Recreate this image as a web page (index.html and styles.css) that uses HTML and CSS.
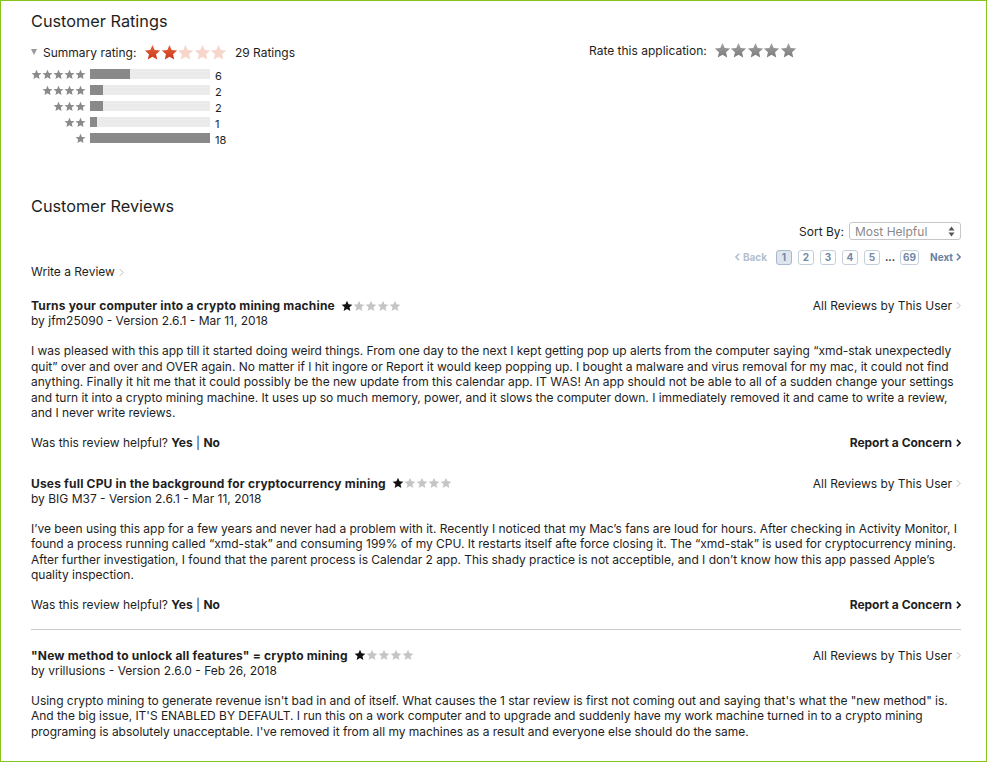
FILE: index.html
```html
<!DOCTYPE html>
<html lang="en">
<head>
  <meta charset="UTF-8" />
  <title>Customer Ratings and Reviews</title>
  <link rel="stylesheet" href="styles.css">
</head>
<body>
<svg class="defs" width="0" height="0" aria-hidden="true">
  <defs>
    <linearGradient id="redStar" x1="0" y1="0" x2="0" y2="1">
      <stop offset="0" stop-color="#e8603a" />
      <stop offset="1" stop-color="#c9381c" />
    </linearGradient>
    <linearGradient id="greyStar" x1="0" y1="0" x2="0" y2="1">
      <stop offset="0" stop-color="#a3a3a3" />
      <stop offset="1" stop-color="#7a7a7a" />
    </linearGradient>
    <symbol id="star" viewBox="0 0 24 24">
      <path d="M12 1.5l3.1 7.1 7.7.7-5.8 5.1 1.7 7.6L12 18l-6.7 4 1.7-7.6-5.8-5.1 7.7-.7z" />
    </symbol>
    <symbol id="chev" viewBox="0 0 6 10">
      <path d="M1 1l4 4-4 4" fill="none" stroke="currentColor" />
    </symbol>
  </defs>
</svg>

<div class="frame">
  <section class="ratings">
    <h2 class="section-title">Customer Ratings</h2>
    <div class="ratings-body">
      <div class="summary">
        <div class="summary-line">
          <span class="caret"></span>
          <span>Summary rating:</span>
          <span class="big-stars">
            <svg class="on"><use href="#star" /></svg><svg class="on"><use href="#star" /></svg><svg class="off"><use href="#star" /></svg><svg class="off"><use href="#star" /></svg><svg class="off"><use href="#star" /></svg>
          </span>
          <span>29 Ratings</span>
        </div>
        <ul class="histogram">
          <li>
            <span class="hist-stars"><svg><use href="#star" /></svg><svg><use href="#star" /></svg><svg><use href="#star" /></svg><svg><use href="#star" /></svg><svg><use href="#star" /></svg></span>
            <span class="bar"><span class="fill" style="width: 33.3%"></span></span>
            <span class="count">6</span>
          </li>
          <li>
            <span class="hist-stars"><svg><use href="#star" /></svg><svg><use href="#star" /></svg><svg><use href="#star" /></svg><svg><use href="#star" /></svg></span>
            <span class="bar"><span class="fill" style="width: 11.1%"></span></span>
            <span class="count">2</span>
          </li>
          <li>
            <span class="hist-stars"><svg><use href="#star" /></svg><svg><use href="#star" /></svg><svg><use href="#star" /></svg></span>
            <span class="bar"><span class="fill" style="width: 11.1%"></span></span>
            <span class="count">2</span>
          </li>
          <li>
            <span class="hist-stars"><svg><use href="#star" /></svg><svg><use href="#star" /></svg></span>
            <span class="bar"><span class="fill" style="width: 5.6%"></span></span>
            <span class="count">1</span>
          </li>
          <li>
            <span class="hist-stars"><svg><use href="#star" /></svg></span>
            <span class="bar"><span class="fill" style="width: 100%"></span></span>
            <span class="count">18</span>
          </li>
        </ul>
      </div>
      <div class="rate">
        <span>Rate this application:</span>
        <span class="rate-stars"><svg><use href="#star" /></svg><svg><use href="#star" /></svg><svg><use href="#star" /></svg><svg><use href="#star" /></svg><svg><use href="#star" /></svg></span>
      </div>
    </div>
  </section>

  <section class="reviews">
    <h2 class="section-title reviews-title">Customer Reviews</h2>
    <div class="sort-row">
      <span>Sort By:</span>
      <div class="select">
        <span>Most Helpful</span>
        <svg class="updown" viewBox="0 0 7 11"><path d="M3.5 0.5L6.5 4.5H0.5z M3.5 10.5L0.5 6.5H6.5z" /></svg>
      </div>
    </div>
    <div class="pager">
      <span class="pager-back"><svg class="pager-chev back-chev"><use href="#chev" /></svg>Back</span>
      <span class="page current">1</span>
      <span class="page">2</span>
      <span class="page">3</span>
      <span class="page">4</span>
      <span class="page">5</span>
      <span class="dots">...</span>
      <span class="page">69</span>
      <span class="pager-next">Next<svg class="pager-chev"><use href="#chev" /></svg></span>
    </div>
    <div class="write">Write a Review <svg class="chev"><use href="#chev" /></svg></div>

    <article class="review">
      <div class="review-head">
        <div>
          <span class="review-title">Turns your computer into a crypto mining machine</span>
          <span class="mini-stars"><svg class="on"><use href="#star" /></svg><svg><use href="#star" /></svg><svg><use href="#star" /></svg><svg><use href="#star" /></svg><svg><use href="#star" /></svg></span>
        </div>
        <span class="user-link">All Reviews by This User <svg class="chev"><use href="#chev" /></svg></span>
      </div>
      <div class="byline">by jfm25090 - Version 2.6.1 - Mar 11, 2018</div>
      <p class="review-text">I was pleased with this app till it started doing weird things. From one day to the next I kept getting pop up alerts from the computer saying “xmd-stak unexpectedly quit” over and over and OVER again. No matter if I hit ingore or Report it would keep popping up. I bought a malware and virus removal for my mac, it could not find anything. Finally it hit me that it could possibly be the new update from this calendar app. IT WAS! An app should not be able to all of a sudden change your settings and turn it into a crypto mining machine. It uses up so much memory, power, and it slows the computer down. I immediately removed it and came to write a review, and I never write reviews.</p>
      <div class="review-foot">
        <span>Was this review helpful? <b>Yes</b> | <b>No</b></span>
        <b class="concern">Report a Concern <svg class="chev bold"><use href="#chev" /></svg></b>
      </div>
    </article>

    <article class="review">
      <div class="review-head">
        <div>
          <span class="review-title">Uses full CPU in the background for cryptocurrency mining</span>
          <span class="mini-stars"><svg class="on"><use href="#star" /></svg><svg><use href="#star" /></svg><svg><use href="#star" /></svg><svg><use href="#star" /></svg><svg><use href="#star" /></svg></span>
        </div>
        <span class="user-link">All Reviews by This User <svg class="chev"><use href="#chev" /></svg></span>
      </div>
      <div class="byline">by BIG M37 - Version 2.6.1 - Mar 11, 2018</div>
      <p class="review-text">I’ve been using this app for a few years and never had a problem with it. Recently I noticed that my Mac’s fans are loud for hours. After checking in Activity Monitor, I found a process running called “xmd-stak” and consuming 199% of my CPU. It restarts itself afte force closing it. The “xmd-stak” is used for cryptocurrency mining. After further investigation, I found that the parent process is Calendar 2 app. This shady practice is not acceptible, and I don’t know how this app passed Apple’s quality inspection.</p>
      <div class="review-foot">
        <span>Was this review helpful? <b>Yes</b> | <b>No</b></span>
        <b class="concern">Report a Concern <svg class="chev bold"><use href="#chev" /></svg></b>
      </div>
    </article>

    <article class="review divided">
      <div class="review-head">
        <div>
          <span class="review-title">"New method to unlock all features" = crypto mining</span>
          <span class="mini-stars"><svg class="on"><use href="#star" /></svg><svg><use href="#star" /></svg><svg><use href="#star" /></svg><svg><use href="#star" /></svg><svg><use href="#star" /></svg></span>
        </div>
        <span class="user-link">All Reviews by This User <svg class="chev"><use href="#chev" /></svg></span>
      </div>
      <div class="byline">by vrillusions - Version 2.6.0 - Feb 26, 2018</div>
      <p class="review-text">Using crypto mining to generate revenue isn't bad in and of itself. What causes the 1 star review is first not coming out and saying that's what the "new method" is. And the big issue, IT'S ENABLED BY DEFAULT. I run this on a work computer and to upgrade and suddenly have my work machine turned in to a crypto mining programing is absolutely unacceptable. I've removed it from all my machines as a result and everyone else should do the same.</p>
    </article>
  </section>
</div>
</body>
</html>
```

FILE: styles.css
```css
* {
  box-sizing: border-box;
}
body {
  margin: 0;
  background: #fff;
}
.defs {
  position: absolute;
}
.frame {
  width: 987px;
  height: 762px;
  overflow: hidden;
  border: 1px solid #85c41d;
  padding: 0 25px 0 30px;
  font-family: Inter, "Liberation Sans", sans-serif;
  font-size: 12px;
  color: #1e1e1e;
}
.section-title {
  margin: 0;
  padding-top: 10px;
  font-size: 16.3px;
  font-weight: 400;
  line-height: 20px;
}

/* ratings */
.ratings-body {
  display: flex;
}
.summary {
  width: 558px;
}
.summary-line {
  display: flex;
  align-items: center;
  gap: 6px;
  margin-top: 13px;
  height: 16px;
}
.caret {
  width: 0;
  height: 0;
  border-left: 3.5px solid transparent;
  border-right: 3.5px solid transparent;
  border-top: 6px solid #999;
}
.big-stars {
  display: flex;
  margin: 0 2px;
}
.big-stars svg {
  width: 17px;
  height: 17px;
  margin-right: -0.5px;
}
.big-stars .on {
  fill: url(#redStar);
}
.big-stars .off {
  fill: #f6d5cb;
}
.histogram {
  list-style: none;
  margin: 6px 0 0;
  padding: 0;
}
.histogram li {
  display: flex;
  align-items: center;
  height: 16px;
}
.hist-stars {
  display: flex;
  justify-content: flex-end;
  width: 55px;
  margin-right: 4px;
  fill: #8a8a8a;
}
.hist-stars svg {
  width: 11px;
  height: 11px;
}
.bar {
  width: 120px;
  height: 10px;
  background: #ebebeb;
}
.fill {
  display: block;
  height: 100%;
  background: #898989;
}
.count {
  margin-left: 5px;
  padding-top: 3px;
  font-size: 11px;
}
.rate {
  display: flex;
  align-items: center;
  gap: 7px;
  margin-top: 11px;
  height: 16px;
}
.rate-stars {
  display: flex;
  fill: url(#greyStar);
}
.rate-stars svg {
  width: 17px;
  height: 17px;
  margin-right: -0.5px;
}

/* reviews header */
.reviews-title {
  margin-top: 50px;
  padding-top: 0;
}
.sort-row {
  display: flex;
  justify-content: flex-end;
  align-items: center;
  gap: 5px;
  margin-top: 6px;
}
.select {
  display: flex;
  justify-content: space-between;
  align-items: center;
  width: 112px;
  height: 18px;
  padding: 0 5px;
  border: 1px solid #c6c6c6;
  border-radius: 3px;
  color: #8a8a8a;
}
.updown {
  width: 7px;
  height: 11px;
  fill: #555;
}
.pager {
  display: flex;
  justify-content: flex-end;
  align-items: center;
  gap: 6px;
  height: 16px;
  margin-top: 9px;
  font-size: 10px;
  font-weight: 700;
  color: #7489a6;
}
.page {
  min-width: 16px;
  height: 15px;
  padding: 0 2px;
  border: 1px solid #c5cfdc;
  border-radius: 3px;
  text-align: center;
  line-height: 13px;
}
.page.current {
  background: #dde5ef;
  border-color: #a9b8cc;
}
.dots {
  color: #333;
  margin: 0 -1px;
}
.pager-back {
  display: flex;
  align-items: center;
  margin-right: 3px;
  color: #b3bfcf;
}
.pager-next {
  display: flex;
  align-items: center;
  margin-left: 5px;
  color: #6a7f9e;
}
.pager-chev {
  width: 5px;
  height: 8px;
  margin-left: 3px;
  stroke-width: 2;
}
.back-chev {
  margin: 0 3px 0 0;
  transform: scaleX(-1);
}
.write {
  display: flex;
  align-items: center;
  gap: 4px;
  line-height: 14px;
}
.chev {
  width: 5px;
  height: 9px;
  color: #aaa;
}
.chev.bold {
  color: #111;
  stroke-width: 2;
  width: 5px;
  height: 8px;
}

/* reviews */
.review {
  margin-top: 19px;
}
.review + .review {
  margin-top: 25px;
}
.review.divided {
  margin-top: 16px;
  padding-top: 18px;
  border-top: 1px solid #c9c9c9;
}
.review-head {
  display: flex;
  justify-content: space-between;
  align-items: center;
  height: 15px;
  line-height: 15px;
}
.review-head > div {
  display: flex;
  align-items: center;
}
.review-title {
  font-weight: 700;
  letter-spacing: 0.18px;
}
.mini-stars {
  display: flex;
  margin-left: 6px;
  fill: #c5c5c5;
}
.mini-stars svg {
  width: 12px;
  height: 12px;
}
.mini-stars .on {
  fill: #111;
}
.user-link,
.concern {
  display: flex;
  align-items: center;
  gap: 4px;
}
.byline {
  line-height: 16px;
}
.review-text {
  margin: 14px 0 0;
  line-height: 15.5px;
  letter-spacing: -0.03px;
}
.review-foot {
  display: flex;
  justify-content: space-between;
  margin-top: 14px;
  line-height: 16px;
}
```
